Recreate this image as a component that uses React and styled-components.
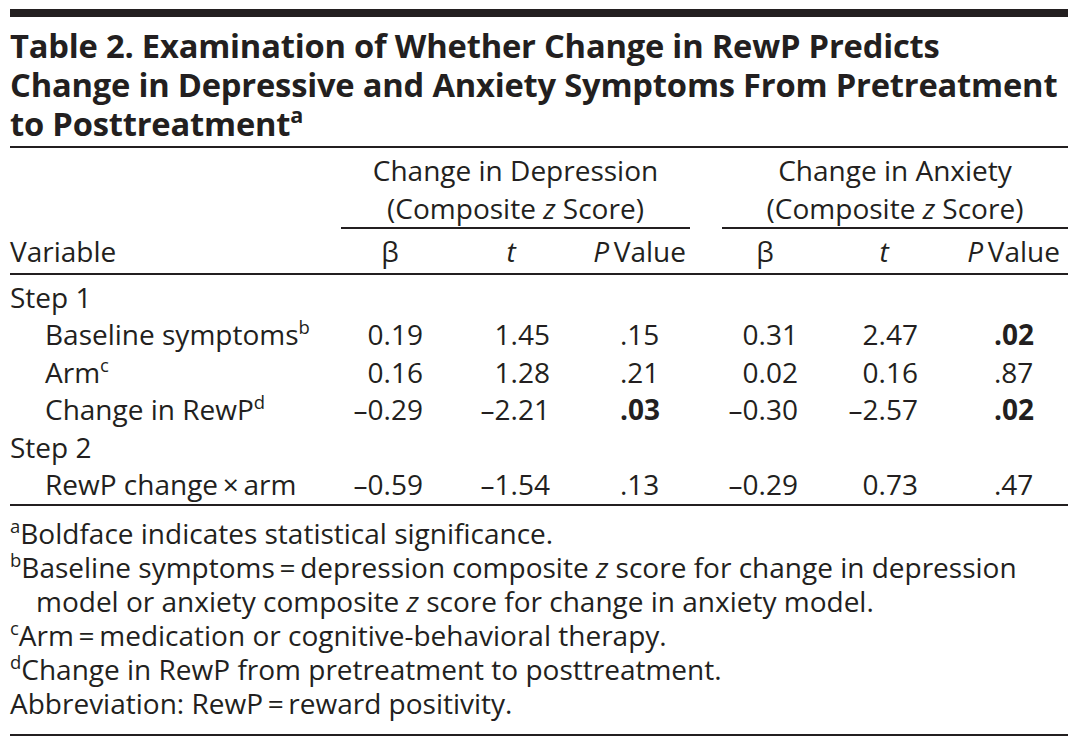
import React from "react";
import styled, { createGlobalStyle } from "styled-components";

const Global = createGlobalStyle`
  html, body { margin: 0; padding: 0; background: #fff; }
  body { font-family: "Open Sans", "Noto Sans", sans-serif; color: #231f20; }
`;

const Page = styled.div`
  width: 1058px;
  margin: 0 10px;
  padding-top: 9px;
`;

const TopBar = styled.div`
  height: 8px;
  background: #231f20;
`;

const Title = styled.h1`
  margin: 9px 0 3px;
  font-size: 32.7px;
  line-height: 39px;
  font-weight: 700;
  letter-spacing: -0.2px;
  white-space: nowrap;
`;

const Rule = styled.div`
  grid-column: 1 / -1;
  height: 2px;
  background: #231f20;
`;

const Grid = styled.div`
  display: grid;
  grid-template-columns: 331px 98px 144px 107px 32px 86px 152px 108px;
  font-size: 28px;
`;

const Spanner = styled.div`
  grid-column: ${(p) => p.$cols};
  text-align: center;
  line-height: 38px;
  padding-top: 3px;
  border-bottom: 2px solid #231f20;
`;

const Blank = styled.div`
  grid-column: ${(p) => p.$cols};
`;

const HeadCell = styled.div`
  line-height: 38px;
  padding: 3px ${(p) => p.$pr || 0}px 3px 0;
  text-align: ${(p) => p.$align || "center"};
  white-space: nowrap;
`;

const Cell = styled.div`
  line-height: 37.4px;
  text-align: ${(p) => p.$align || "right"};
  padding-right: ${(p) => p.$pr || 0}px;
  padding-left: ${(p) => p.$pl || 0}px;
  padding-top: ${(p) => (p.$first ? 4 : 0)}px;
  padding-bottom: ${(p) => (p.$last ? 1 : 0)}px;
  font-weight: ${(p) => (p.$bold ? 700 : 400)};
  white-space: nowrap;
`;

const Label = styled(Cell)`
  text-align: left;
  padding-left: ${(p) => (p.$indent ? 35 : 0)}px;
`;

const Gap = styled.div``;

const I = styled.i`
  font-style: italic;
`;

const Sup = styled.sup`
  font-size: 0.66em;
  line-height: 0;
  vertical-align: 0.6em;
`;

const Notes = styled.div`
  padding: 10px 0 14px;
  font-size: 28px;
  line-height: 34px;
  border-bottom: 2px solid #231f20;
`;

const Note = styled.p`
  margin: 0;
  padding-left: ${(p) => (p.$hang ? 26 : 0)}px;
  text-indent: ${(p) => (p.$hang ? -26 : 0)}px;
`;

const rows = [
  { label: "Step 1", step: true },
  { label: <>Baseline symptoms<Sup>b</Sup></>, d: ["0.19", "1.45", ".15"], a: ["0.31", "2.47", ".02"], ab: true },
  { label: <>Arm<Sup>c</Sup></>, d: ["0.16", "1.28", ".21"], a: ["0.02", "0.16", ".87"] },
  { label: <>Change in RewP<Sup>d</Sup></>, d: ["\u20130.29", "\u20132.21", ".03"], a: ["\u20130.30", "\u20132.57", ".02"], db: true, ab: true },
  { label: "Step 2", step: true },
  { label: <>RewP change{"\u2009\u00d7\u2009"}arm</>, d: ["\u20130.59", "\u20131.54", ".13"], a: ["\u20130.29", "0.73", ".47"], last: true },
];

export default function App() {
  return (
    <Page>
      <Global />
      <TopBar />
      <Title>
        Table 2. Examination of Whether Change in RewP Predicts
        <br />
        Change in Depressive and Anxiety Symptoms From Pretreatment
        <br />
        to Posttreatment<Sup>a</Sup>
      </Title>
      <Grid>
        <Rule />
        <Blank $cols="1 / 2" />
        <Spanner $cols="2 / 5">
          Change in Depression
          <br />
          (Composite <I>z</I> Score)
        </Spanner>
        <Blank $cols="5 / 6" />
        <Spanner $cols="6 / 9">
          Change in Anxiety
          <br />
          (Composite <I>z</I> Score)
        </Spanner>

        <HeadCell $align="left">Variable</HeadCell>
        <HeadCell>β</HeadCell>
        <HeadCell><I>t</I></HeadCell>
        <HeadCell $align="right" $pr={4}><I>P</I>{"\u2009"}Value</HeadCell>
        <Gap />
        <HeadCell>β</HeadCell>
        <HeadCell><I>t</I></HeadCell>
        <HeadCell $align="right" $pr={8}><I>P</I>{"\u2009"}Value</HeadCell>
        <Rule />

        {rows.map((r, i) => {
          const common = { $first: i === 0, $last: !!r.last };
          if (r.step) {
            return (
              <React.Fragment key={i}>
                <Label {...common}>{r.label}</Label>
                <Blank $cols="2 / -1" />
              </React.Fragment>
            );
          }
          return (
            <React.Fragment key={i}>
              <Label {...common} $indent>{r.label}</Label>
              <Cell {...common} $pr={16}>{r.d[0]}</Cell>
              <Cell {...common} $pr={33}>{r.d[1]}</Cell>
              <Cell {...common} $align="left" $pl={37} $bold={r.db}>{r.d[2]}</Cell>
              <Gap />
              <Cell {...common} $pr={10}>{r.a[0]}</Cell>
              <Cell {...common} $pr={42}>{r.a[1]}</Cell>
              <Cell {...common} $align="left" $pl={34} $bold={r.ab}>{r.a[2]}</Cell>
            </React.Fragment>
          );
        })}
        <Rule />
      </Grid>
      <Notes>
        <Note $hang><Sup>a</Sup>Boldface indicates statistical significance.</Note>
        <Note $hang>
          <Sup>b</Sup>Baseline symptoms{"\u2009=\u2009"}depression composite <I>z</I> score for change in depression model or anxiety composite <I>z</I> score for change in anxiety model.
        </Note>
        <Note $hang><Sup>c</Sup>Arm{"\u2009=\u2009"}medication or cognitive-behavioral therapy.</Note>
        <Note $hang><Sup>d</Sup>Change in RewP from pretreatment to posttreatment.</Note>
        <Note>Abbreviation: RewP{"\u2009=\u2009"}reward positivity.</Note>
      </Notes>
    </Page>
  );
}
